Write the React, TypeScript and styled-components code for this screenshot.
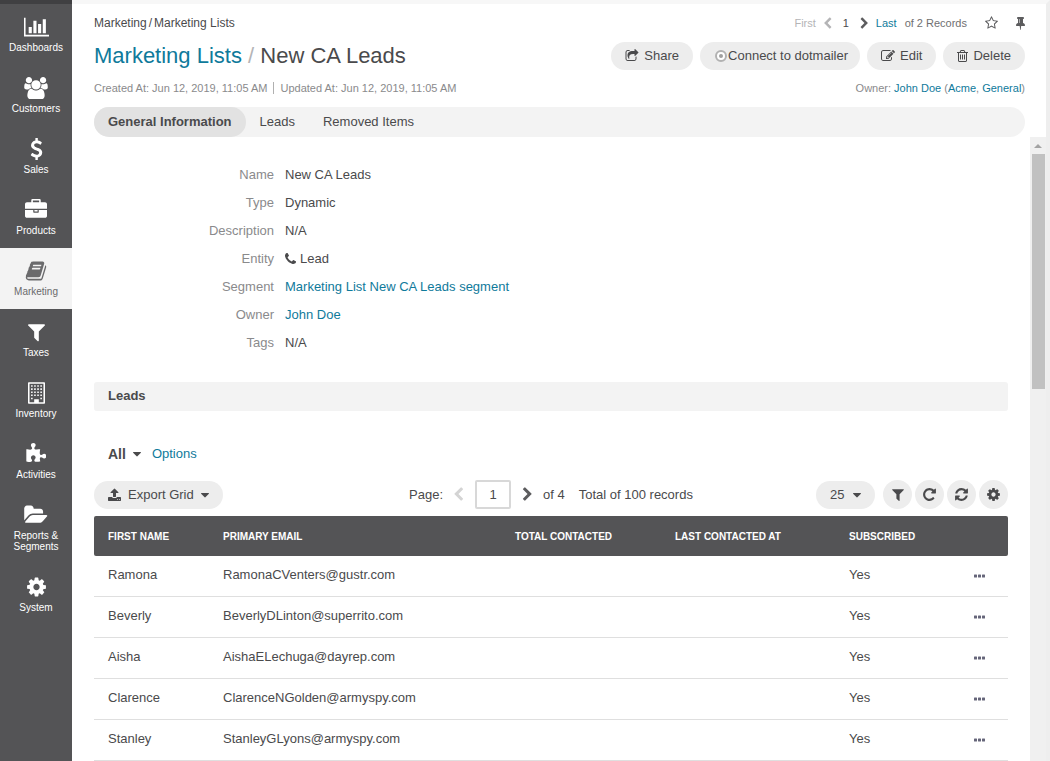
import React from "react";
import styled, { createGlobalStyle, css } from "styled-components";

const color = {
  text: "#4a4a4c",
  muted: "#8a8a8c",
  faint: "#b4b4b6",
  link: "#0f7a9b",
  dark: "#545456",
  darker: "#404042",
  pill: "#ededed",
  panel: "#f3f3f3",
  active: "#e2e2e2",
  line: "#dfdfdf",
  white: "#ffffff",
};

const GlobalStyle = createGlobalStyle`
  *, *::before, *::after { box-sizing: border-box; }
  body {
    margin: 0;
    background: ${color.white};
    color: ${color.text};
    font: 13px/18px "Liberation Sans", Arial, sans-serif;
  }
  button, input, select { font: inherit; color: inherit; }
  a { color: ${color.link}; text-decoration: none; }
`;

/* Each entry: [left edge, width, path] on a grid 1792 units high. */
const glyphs = {
  chart: [0, 2048, "M640 896v512h-256v-512h256zm384-512v1024h-256v-1024h256zm1024 1152v128h-2048v-1536h128v1408h1920zm-640-896v768h-256v-768h256zm384-384v1152h-256v-1152h256z"],
  users: [0, 1920, "M593 896q-162 5-265 128h-134q-82 0-138-40.5t-56-118.5q0-353 124-353 6 0 43.5 21t97.5 42.5 119 21.5q67 0 133-23-5 37-5 66 0 139 81 256zm1071 637q0 120-73 189.5t-194 69.5h-874q-121 0-194-69.5t-73-189.5q0-53 3.5-103.5t14-109 26.5-108.5 43-97.5 62-81 85.5-53.5 111.5-20q10 0 43 21.5t73 48 107 48 135 21.5 135-21.5 107-48 73-48 43-21.5q61 0 111.5 20t85.5 53.5 62 81 43 97.5 26.5 108.5 14 109 3.5 103.5zm-1024-1277q0 106-75 181t-181 75-181-75-75-181 75-181 181-75 181 75 75 181zm704 384q0 159-112.5 271.5t-271.5 112.5-271.5-112.5-112.5-271.5 112.5-271.5 271.5-112.5 271.5 112.5 112.5 271.5zm576 225q0 78-56 118.5t-138 40.5h-134q-103-123-265-128 81-117 81-256 0-29-5-66 66 23 133 23 59 0 119-21.5t97.5-42.5 43.5-21q124 0 124 353zm-128-609q0 106-75 181t-181 75-181-75-75-181 75-181 181-75 181 75 75 181z"],
  dollar: [384, 1024, "M1362 1185q0 153-99.5 263.5t-258.5 136.5v175q0 14-9 23t-23 9h-135q-13 0-22.5-9.5t-9.5-22.5v-175q-66-9-127.5-31t-101.5-44.5-74-48-46.5-37.5-17.5-18q-17-21-2-41l103-135q7-10 23-12 15-2 24 9l2 2q113 99 243 125 37 8 74 8 81 0 142.5-43t61.5-122q0-28-15-53t-33.5-42-58.5-37.5-66-32-80-32.5q-39-16-61.5-25t-61.5-26.5-62.5-31-56.5-35.5-53.5-42.5-43.5-49-35.5-58-21-66.5-8.5-78q0-138 98-242t255-134v-180q0-13 9.5-22.5t22.5-9.5h135q14 0 23 9t9 23v176q57 6 110.5 23t87 33.5 63.5 37.5 39 29 15 14q17 18 5 38l-81 146q-8 15-23 16-14 3-27-7-3-3-14.5-12t-39-26.5-58.5-32-74.5-26-85.5-11.5q-95 0-155 43t-60 111q0 26 8.5 48t29.5 41.5 39.5 33 56 31 60.5 27 70 27.5q53 20 81 31.5t76 35 75.5 42.5 62 50 53 63.5 31.5 76.5 13 94z"],
  briefcase: [0, 1792, "M640 256h512v-128h-512v128zm1152 640v480q0 66-47 113t-113 47h-1472q-66 0-113-47t-47-113v-480h672v160q0 26 19 45t45 19h320q26 0 45-19t19-45v-160h672zm-768 0v128h-256v-128h256zm768-480v384h-1792v-384q0-66 47-113t113-47h352v-160q0-40 28-68t68-28h576q40 0 68 28t28 68v160h352q66 0 113 47t47 113z"],
  book: [0, 1792, "M1703 478q40 57 18 129l-275 906q-19 64-76.5 107.5t-122.5 43.5h-923q-77 0-148.5-53.5t-99.5-131.5q-24-67-2-127 0-4 3-27t4-37q1-8-3-21.5t-3-19.5q2-11 8-21t16.5-23.5 16.5-23.5q23-38 45-91.5t30-91.5q3-10 .5-30t-.5-28q3-11 17-28t17-23q21-36 42-92t25-90q1-9-2.5-32t.5-28q4-13 22-30.5t22-22.5q19-26 42.5-84.5t27.5-96.5q1-8-3-25.5t-2-26.5q2-8 9-18t18-23 17-21q8-12 16.5-30.5t15-35 16-36 19.5-32 26.5-23.5 36-11.5 47.5 5.5l-1 3q38-9 51-9h761q74 0 114 56t18 130l-274 906q-36 119-71.5 153.5t-128.5 34.5h-869q-27 0-38 15-11 16-1 43 24 70 144 70h923q29 0 56-15.5t35-41.5l300-987q7-22 5-57 38 15 59 43zm-1064 2q-4 13 2 22.5t20 9.5h608q13 0 25.5-9.5t16.5-22.5l21-64q4-13-2-22.5t-20-9.5h-608q-13 0-25.5 9.5t-16.5 22.5zm-83 256q-4 13 2 22.5t20 9.5h608q13 0 25.5-9.5t16.5-22.5l21-64q4-13-2-22.5t-20-9.5h-608q-13 0-25.5 9.5t-16.5 22.5z"],
  filter: [192, 1408, "M1595 295q17 41-14 70l-493 493v742q0 42-39 59-13 5-25 5-27 0-45-19l-256-256q-19-19-19-45v-486l-493-493q-31-29-14-70 17-39 59-39h1280q42 0 59 39z"],
  building: [192, 1408, "M192 64q0-64 64-64h1280q64 0 64 64v1664q0 64-64 64h-1280q-64 0-64-64zM320 128v1536h384v-256h384v256h384v-1536zM448 256h128v128h-128zM704 256h128v128h-128zM960 256h128v128h-128zM1216 256h128v128h-128zM448 512h128v128h-128zM704 512h128v128h-128zM960 512h128v128h-128zM1216 512h128v128h-128zM448 768h128v128h-128zM704 768h128v128h-128zM960 768h128v128h-128zM1216 768h128v128h-128zM448 1024h128v128h-128zM704 1024h128v128h-128zM960 1024h128v128h-128zM1216 1024h128v128h-128zM448 1280h128v128h-128zM1216 1280h128v128h-128z"],
  puzzle: [64, 1664, "M1755 1082q0 81-44.5 135t-123.5 54q-41 0-77.5-17.5t-59-38-56.5-38-71-17.5q-110 0-110 124 0 39 16 115t15 115v5q-22 0-33 1-34 3-97.5 11.5t-115.5 13.5-98 5q-61 0-103-26.5t-42-83.5q0-37 17.5-71t38-56.5 38-59 17.5-77.5q0-79-54-123.5t-135-44.5q-84 0-143 45.5t-59 127.5q0 43 15 83t33.5 64.5 33.5 53 15 50.5q0 45-46 89-37 35-117 35-95 0-245-24-9-2-27.5-4t-27.5-4l-13-2q-1 0-3-1-2 0-2-1v-1024q2 1 17.5 3.5t34 5 21.5 3.5q150 24 245 24 80 0 117-35 46-44 46-89 0-22-15-50.5t-33.5-53-33.5-64.5-15-83q0-82 59-127.5t144-45.5q80 0 134 44.5t54 123.5q0 41-17.5 77.5t-38 59-38 56.5-17.5 71q0 57 42 83.5t103 26.5q64 0 180-15t163-17v2q-1 2-3.5 17.5t-5 34-3.5 21.5q-24 150-24 245 0 80 35 117 44 46 89 46 22 0 50.5-15t53-33.5 64.5-33.5 83-15q82 0 127.5 59t45.5 143z"],
  folder: [0, 1920, "M1879 952q0 31-31 66l-336 396q-43 51-120.5 86.5t-143.5 35.5h-1088q-34 0-60.5-13t-26.5-43q0-31 31-66l336-396q43-51 120.5-86.5t143.5-35.5h1088q34 0 60.5 13t26.5 43zm-343-344v160h-832q-94 0-197 47.5t-164 119.5l-337 396-5 6q0-4-.5-12.5t-.5-12.5v-960q0-92 66-158t158-66h320q92 0 158 66t66 158v32h544q92 0 158 66t66 158z"],
  cog: [128, 1536, "M1152 896q0-106-75-181t-181-75-181 75-75 181 75 181 181 75 181-75 75-181zm512-109v222q0 12-8 23t-20 13l-185 28q-19 54-39 91 35 50 107 138 10 12 10 25t-9 23q-27 37-99 108t-94 71q-12 0-26-9l-138-108q-44 23-91 38-16 136-29 186-7 28-36 28h-222q-14 0-24.5-8.5t-11.5-21.5l-28-184q-49-16-90-37l-141 107q-10 9-25 9-14 0-25-11-126-114-165-168-7-10-7-23 0-12 8-23 15-21 51-66.5t54-70.5q-27-50-41-99l-183-27q-13-2-21-12.5t-8-23.5v-222q0-12 8-23t19-13l186-28q14-46 39-92-40-57-107-138-10-12-10-24 0-10 9-23 26-36 98.5-107.5t94.5-71.5q13 0 26 10l138 107q44-23 91-38 16-136 29-186 7-28 36-28h222q14 0 24.5 8.5t11.5 21.5l28 184q49 16 90 37l142-107q9-9 24-9 13 0 25 10 129 119 165 170 7 8 7 22 0 12-8 23-15 21-51 66.5t-54 70.5q26 50 41 98l183 28q13 2 21 12.5t8 23.5z"],
  star: [64, 1664, "M1201 1004l306-297-422-62-189-382-189 382-422 62 306 297-73 421 378-199 377 199zm527-357q0 22-26 48l-363 354 86 500q1 7 1 20 0 50-41 50-19 0-40-12l-449-236-449 236q-22 12-40 12-21 0-31.5-14.5t-10.5-35.5q0-6 2-20l86-500-364-354q-25-27-25-48 0-37 56-46l502-73 225-455q19-41 49-41t49 41l225 455 502 73q56 9 56 46z"],
  pin: [320, 1152, "M800 864v-448q0-14-9-23t-23-9-23 9-9 23v448q0 14 9 23t23 9 23-9 9-23zm672 352q0 26-19 45t-45 19h-429l-51 483q-2 12-10.5 20.5t-20.5 8.5h-1q-27 0-32-27l-76-485h-404q-26 0-45-19t-19-45q0-123 78.5-221.5t177.5-98.5v-512q-52 0-90-38t-38-90 38-90 90-38h640q52 0 90 38t38 90-38 90-90 38v512q99 0 177.5 98.5t78.5 221.5z"],
  left: [384, 1152, "M1427 301l-531 531 531 531q19 19 19 45t-19 45l-166 166q-19 19-45 19t-45-19l-742-742q-19-19-19-45t19-45l742-742q19-19 45-19t45 19l166 166q19 19 19 45t-19 45z"],
  right: [256, 1152, "M1363 877l-742 742q-19 19-45 19t-45-19l-166-166q-19-19-19-45t19-45l531-531-531-531q-19-19-19-45t19-45l166-166q19-19 45-19t45 19l742 742q19 19 19 45t-19 45z"],
  phone: [192, 1408, "M1600 1240q0 27-10 70.5t-21 68.5q-21 50-122 106-94 51-186 51-27 0-53-3.5t-57.5-12.5-47-14.5-55.5-20.5-49-18q-98-35-175-83-127-79-264-216t-216-264q-48-77-83-175-3-9-18-49t-20.5-55.5-14.5-47-12.5-57.5-3.5-53q0-92 51-186 56-101 106-122 25-11 68.5-21t70.5-10q14 0 21 3 18 6 53 76 11 19 30 54t35 63.5 31 53.5q3 4 17.5 25t21.5 35.5 7 28.5q0 20-28.5 50t-62 55-62 53-28.5 46q0 9 5 22.5t8.5 20.5 14 24 11.5 19q76 137 174 235t235 174q2 1 19 11.5t24 14 20.5 8.5 22.5 5q18 0 46-28.5t53-62 55-62 50-28.5q14 0 28.5 7t35.5 21.5 25 17.5q25 15 53.5 31t63.5 35 54 30q70 35 76 53 3 7 3 21z"],
  trash: [192, 1408, "M704 736v576q0 14-9 23t-23 9h-64q-14 0-23-9t-9-23v-576q0-14 9-23t23-9h64q14 0 23 9t9 23zm256 0v576q0 14-9 23t-23 9h-64q-14 0-23-9t-9-23v-576q0-14 9-23t23-9h64q14 0 23 9t9 23zm256 0v576q0 14-9 23t-23 9h-64q-14 0-23-9t-9-23v-576q0-14 9-23t23-9h64q14 0 23 9t9 23zm128 724v-948h-896v948q0 22 7 40.5t14.5 27 10.5 8.5h832q3 0 10.5-8.5t14.5-27 7-40.5zm-672-1076h448l-48-117q-7-9-17-11h-317q-10 2-17 11zm928 32v64q0 14-9 23t-23 9h-96v948q0 83-47 143.5t-113 60.5h-832q-66 0-113-58.5t-47-141.5v-952h-96q-14 0-23-9t-9-23v-64q0-14 9-23t23-9h309l70-167q15-37 54-63t79-26h320q40 0 79 26t54 63l70 167h309q14 0 23 9t9 23z"],
  edit: [0, 1792, "M888 1184l116-116-152-152-116 116v56h96v96h56zm440-720q-16-16-33 1l-350 350q-17 17-1 33t33-1l350-350q17-17 1-33zm80 594v190q0 119-84.5 203.5t-203.5 84.5h-832q-119 0-203.5-84.5t-84.5-203.5v-832q0-119 84.5-203.5t203.5-84.5h832q63 0 117 25 15 7 18 23 3 17-9 29l-49 49q-14 14-32 8-23-6-45-6h-832q-66 0-113 47t-47 113v832q0 66 47 113t113 47h832q66 0 113-47t47-113v-126q0-13 9-22l64-64q15-15 35-7t20 29zm-96-738l288 288-672 672h-288v-288zm444 132l-92 92-288-288 92-92q28-28 68-28t68 28l152 152q28 28 28 68t-28 68z"],
  share: [0, 1792, "M1472 989v259q0 119-84.5 203.5t-203.5 84.5h-832q-119 0-203.5-84.5t-84.5-203.5v-832q0-119 84.5-203.5t203.5-84.5h255q13 0 22.5 9.5t9.5 22.5q0 27-26 32-77 26-133 60-10 4-16 4h-112q-66 0-113 47t-47 113v832q0 66 47 113t113 47h832q66 0 113-47t47-113v-214q0-19 18-29 28-13 54-37 16-16 35-8 21 9 21 29zm237-496l-384 384q-18 19-45 19-12 0-25-5-39-17-39-59v-192h-160q-323 0-438 131-119 137-74 473 3 23-20 34-8 2-12 2-16 0-26-13-10-14-21-31t-39.5-68.5-49.5-99.5-38.5-114-17.5-122q0-49 3.5-91t14-90 28-88 47-81.5 68.5-74 94.5-61.5 124.5-48.5 159.5-30.5 196.5-11h160v-192q0-42 39-59 13-5 25-5 26 0 45 19l384 384q19 19 19 45t-19 45z"],
  repeat: [128, 1536, "M1664 256v448q0 26-19 45t-45 19h-448q-42 0-59-40-17-39 14-69l138-138q-148-137-349-137-104 0-198.5 40.5t-163.5 109.5-109.5 163.5-40.5 198.5 40.5 198.5 109.5 163.5 163.5 109.5 198.5 40.5q119 0 225-52t179-147q7-10 23-12 15 0 25 9l137 138q9 8 9.5 20.5t-7.5 22.5q-109 132-264 204.5t-327 72.5q-156 0-298-61t-245-164-164-245-61-298 61-298 164-245 245-164 298-61q147 0 284.5 55.5t244.5 156.5l130-129q29-31 70-14 39 17 39 59z"],
  refresh: [128, 1536, "M1639 1056q0 5-1 7-64 268-268 434.5t-478 166.5q-146 0-282.5-55t-243.5-157l-129 129q-19 19-45 19t-45-19-19-45v-448q0-26 19-45t45-19h448q26 0 45 19t19 45-19 45l-137 137q71 66 161 102t187 36q134 0 250-65t186-179q11-17 53-117 8-23 30-23h192q13 0 22.5 9.5t9.5 22.5zm25-800v448q0 26-19 45t-45 19h-448q-26 0-45-19t-19-45 19-45l138-138q-148-137-349-137-134 0-250 65t-186 179q-11 17-53 117-8 23-30 23h-199q-13 0-22.5-9.5t-9.5-22.5v-7q65-268 270-434.5t480-166.5q146 0 284 55.5t245 156.5l130-129q19-19 45-19t45 19 19 45z"],
  upload: [64, 1664, "M1344 1472q0-26-19-45t-45-19-45 19-19 45 19 45 45 19 45-19 19-45zm256 0q0-26-19-45t-45-19-45 19-19 45 19 45 45 19 45-19 19-45zm128-224v320q0 40-28 68t-68 28h-1472q-40 0-68-28t-28-68v-320q0-40 28-68t68-28h427q21 56 70.5 92t110.5 36h256q61 0 110.5-36t70.5-92h427q40 0 68 28t28 68zm-325-648q-17 40-59 40h-256v448q0 26-19 45t-45 19h-256q-26 0-45-19t-19-45v-448h-256q-42 0-59-40-17-39 14-69l448-448q18-19 45-19t45 19l448 448q31 30 14 69z"],
  caret: [384, 1024, "M1408 704q0 26-19 45l-448 448q-19 19-45 19t-45-19l-448-448q-19-19-19-45t19-45 45-19h896q26 0 45 19t19 45z"],
  dots: [192, 1408, "M256 704h256q64 0 64 64v256q0 64-64 64h-256q-64 0-64-64v-256q0-64 64-64zM768 704h256q64 0 64 64v256q0 64-64 64h-256q-64 0-64-64v-256q0-64 64-64zM1280 704h256q64 0 64 64v256q0 64-64 64h-256q-64 0-64-64v-256q0-64 64-64z"],
} as const;

type GlyphName = keyof typeof glyphs;

const Svg = styled.svg`
  display: block;
  flex: none;
  fill: currentColor;
`;

function Icon({ name, size = 14 }: { name: GlyphName; size?: number }) {
  const [x, width, path] = glyphs[name];
  return (
    <Svg
      viewBox={`${x} 0 ${width} 1792`}
      width={Math.round((size * width) / 1792)}
      height={size}
      aria-hidden="true"
    >
      <path fillRule={name === "building" ? "evenodd" : "nonzero"} d={path} />
    </Svg>
  );
}

const Shell = styled.div`
  display: flex;
  min-height: 100vh;
`;

const Sidebar = styled.nav`
  flex: 0 0 72px;
  border-top: 4px solid ${color.darker};
  background: ${color.dark};
`;

const NavItem = styled.a<{ $active?: boolean }>`
  display: flex;
  flex-direction: column;
  align-items: center;
  gap: 4px;
  padding: 12px 4px;
  color: ${(p) => (p.$active ? "#6a6a6c" : color.white)};
  background: ${(p) => (p.$active ? color.panel : "transparent")};
  font-size: 10px;
  line-height: 11px;
  text-align: center;
`;

const Main = styled.main`
  flex: 1;
  min-width: 0;
  display: flex;
  flex-direction: column;
  border-top: 4px solid #f7f7f7;
  border-right: 4px solid #eeeeee;
`;

const Header = styled.header`
  padding: 10px 21px 0 22px;
`;

const Bar = styled.div`
  display: flex;
  align-items: center;
  justify-content: space-between;
`;

const Crumbs = styled.div`
  display: flex;
  gap: 2px;
  font-size: 12px;
`;

const Records = styled.div`
  display: flex;
  align-items: center;
  gap: 8px;
  color: #6f6f71;
  font-size: 11px;
`;

const Faint = styled.span`
  color: ${color.faint};
`;

const Current = styled.span`
  width: 12px;
  text-align: center;
  color: ${color.text};
`;

const IconButton = styled.button<{ $tone?: string }>`
  display: flex;
  align-items: center;
  padding: 0;
  border: 0;
  background: none;
  color: ${(p) => p.$tone ?? "#5c5c5e"};
`;

const Tools = styled.div`
  display: flex;
  gap: 18px;
  margin-left: 10px;
`;

const TitleBar = styled(Bar)`
  margin-top: 10px;
`;

const Title = styled.h1`
  margin: 0;
  font-size: 22px;
  font-weight: 400;
  line-height: 28px;
`;

const Group = styled.div<{ $gap?: number }>`
  display: flex;
  align-items: center;
  gap: ${(p) => p.$gap ?? 7}px;
`;

const pill = css`
  height: 28px;
  border: 0;
  border-radius: 14px;
  background: ${color.pill};
`;

const PillButton = styled.button<{ $gap?: number; $pad?: number }>`
  ${pill}
  display: flex;
  align-items: center;
  gap: ${(p) => p.$gap ?? 5}px;
  padding: 0 ${(p) => p.$pad ?? 14}px;
  white-space: nowrap;
`;

const MetaBar = styled(Bar)`
  margin-top: 10px;
  font-size: 11px;
  line-height: 16px;
  color: ${color.muted};
`;

const Stamp = styled.span`
  & + & {
    margin-left: 6px;
    padding-left: 6px;
    border-left: 1px solid #b0b0b0;
  }
`;

const Tabs = styled.div`
  display: flex;
  height: 30px;
  margin-top: 11px;
  border-radius: 15px;
  background: ${color.panel};
`;

const Tab = styled.button<{ $active?: boolean }>`
  padding: 0 14px;
  border: 0;
  border-radius: 15px;
  background: ${(p) => (p.$active ? color.active : "transparent")};
  font-weight: ${(p) => (p.$active ? 700 : 400)};
`;

const Body = styled.div`
  flex: 1;
  display: flex;
`;

const Content = styled.div`
  flex: 1;
  min-width: 0;
  padding: 24px 22px 0;
`;

const Details = styled.dl`
  display: grid;
  grid-template-columns: 180px 1fr;
  column-gap: 11px;
  margin: 0;
  line-height: 28px;
`;

const Term = styled.dt`
  text-align: right;
  color: ${color.muted};
`;

const Value = styled.dd`
  display: flex;
  align-items: center;
  gap: 4px;
  margin: 0;
`;

const SectionTitle = styled.h2`
  margin: 25px 0 34px;
  padding: 0 14px;
  border-radius: 3px;
  background: ${color.panel};
  font-size: 13px;
  line-height: 28px;
  border-bottom: 1px solid ${color.panel};
`;

const Views = styled.div`
  display: flex;
  align-items: center;
  gap: 11px;
  padding-left: 14px;
`;

const ViewButton = styled.button`
  display: flex;
  align-items: center;
  gap: 7px;
  padding: 0;
  border: 0;
  background: none;
  font-size: 14px;
  font-weight: 700;
`;

const Toolbar = styled.div`
  display: grid;
  grid-template-columns: 1fr auto 1fr;
  align-items: center;
  margin: 17px 0 7px;
`;

const Pager = styled.div`
  display: flex;
  align-items: center;
  gap: 11px;
`;

const PageInput = styled.input`
  width: 36px;
  height: 29px;
  padding: 0;
  border: 2px solid #d8d8d8;
  border-radius: 2px;
  background: ${color.white};
  text-align: center;
`;

const GridTools = styled.div`
  display: flex;
  align-items: center;
  justify-content: flex-end;
  gap: 3px;
`;

const SizePicker = styled.label`
  ${pill}
  display: flex;
  align-items: center;
  margin-right: 5px;
  padding-right: 14px;
`;

const SizeSelect = styled.select`
  appearance: none;
  width: 37px;
  height: 28px;
  padding: 0 0 0 14px;
  border: 0;
  background: none;
`;

const RoundButton = styled.button`
  display: flex;
  align-items: center;
  justify-content: center;
  width: 29px;
  height: 29px;
  padding: 0;
  border: 0;
  border-radius: 50%;
  background: ${color.pill};
`;

const Grid = styled.table`
  width: 100%;
  table-layout: fixed;
  border-collapse: separate;
  border-spacing: 0;
`;

const Col = styled.col<{ $width?: number }>`
  width: ${(p) => (p.$width ? `${p.$width}px` : "auto")};
`;

const HeadCell = styled.th`
  height: 40px;
  padding: 2px 14px 0;
  background: ${color.dark};
  color: ${color.white};
  font-size: 10px;
  text-align: left;
  text-transform: uppercase;
  white-space: nowrap;

  &:first-child { border-radius: 2px 0 0 2px; }
  &:last-child { border-radius: 0 2px 2px 0; }
`;

const Cell = styled.td`
  height: 41px;
  padding: 0 14px 3px;
  border-bottom: 1px solid ${color.line};
`;

const RowMenu = styled(IconButton)`
  margin: 2px auto 0;
`;

const ScrollTrack = styled.div`
  flex: 0 0 16px;
  display: flex;
  flex-direction: column;
  align-items: center;
  background: #f0f0f0;
`;

const ScrollArrow = styled.span`
  margin: 7px 0 6px;
  border: 4px solid transparent;
  border-top: 0;
  border-bottom-color: #a3a3a3;
`;

const ScrollThumb = styled.span`
  width: 13px;
  height: 235px;
  background: #c1c1c1;
`;

const nav: { icon: GlyphName; label: string; active?: boolean }[] = [
  { icon: "chart", label: "Dashboards" },
  { icon: "users", label: "Customers" },
  { icon: "dollar", label: "Sales" },
  { icon: "briefcase", label: "Products" },
  { icon: "book", label: "Marketing", active: true },
  { icon: "filter", label: "Taxes" },
  { icon: "building", label: "Inventory" },
  { icon: "puzzle", label: "Activities" },
  { icon: "folder", label: "Reports & Segments" },
  { icon: "cog", label: "System" },
];

const details: [string, React.ReactNode][] = [
  ["Name", "New CA Leads"],
  ["Type", "Dynamic"],
  ["Description", "N/A"],
  ["Entity", <><Icon name="phone" />Lead</>],
  ["Segment", <a href="#segment">Marketing List New CA Leads segment</a>],
  ["Owner", <a href="#owner">John Doe</a>],
  ["Tags", "N/A"],
];

const leads = [
  ["Ramona", "RamonaCVenters@gustr.com"],
  ["Beverly", "BeverlyDLinton@superrito.com"],
  ["Aisha", "AishaELechuga@dayrep.com"],
  ["Clarence", "ClarenceNGolden@armyspy.com"],
  ["Stanley", "StanleyGLyons@armyspy.com"],
];

const gridTools: { icon: GlyphName; label: string }[] = [
  { icon: "filter", label: "Filters" },
  { icon: "repeat", label: "Refresh" },
  { icon: "refresh", label: "Reset" },
  { icon: "cog", label: "Grid settings" },
];

function DotmailerLogo() {
  return (
    <Svg width="16" height="14" viewBox="0 0 16 14" aria-hidden="true">
      <circle cx="9" cy="7" r="5" fill="#fff" stroke="#b2b2b2" strokeWidth="2" />
      <circle cx="9" cy="7" r="2" fill="#a0a0a0" />
    </Svg>
  );
}

export default function App() {
  return (
    <>
      <GlobalStyle />
      <Shell>
        <Sidebar>
          {nav.map((item) => (
            <NavItem key={item.label} href="#nav" $active={item.active}>
              <Icon name={item.icon} size={22} />
              {item.label}
            </NavItem>
          ))}
        </Sidebar>
        <Main>
          <Header>
            <Bar>
              <Crumbs>
                <span>Marketing</span>
                <span>/</span>
                <span>Marketing Lists</span>
              </Crumbs>
              <Records>
                <Faint>First</Faint>
                <IconButton aria-label="Previous record" $tone={color.faint}>
                  <Icon name="left" size={13} />
                </IconButton>
                <Current>1</Current>
                <IconButton aria-label="Next record">
                  <Icon name="right" size={13} />
                </IconButton>
                <a href="#last">Last</a>
                <span>of 2 Records</span>
                <Tools>
                  <IconButton aria-label="Add to favorites"><Icon name="star" /></IconButton>
                  <IconButton aria-label="Pin page"><Icon name="pin" /></IconButton>
                </Tools>
              </Records>
            </Bar>
            <TitleBar>
              <Title>
                <a href="#lists">Marketing Lists</a> <Faint>/</Faint> New CA Leads
              </Title>
              <Group>
                <PillButton><Icon name="share" />Share</PillButton>
                <PillButton $gap={0} $pad={12}><DotmailerLogo />Connect to dotmailer</PillButton>
                <PillButton><Icon name="edit" />Edit</PillButton>
                <PillButton><Icon name="trash" />Delete</PillButton>
              </Group>
            </TitleBar>
            <MetaBar>
              <div>
                <Stamp>Created At: Jun 12, 2019, 11:05 AM</Stamp>
                <Stamp>Updated At: Jun 12, 2019, 11:05 AM</Stamp>
              </div>
              <div>
                Owner: <a href="#owner">John Doe</a> (<a href="#acme">Acme</a>, <a href="#general">General</a>)
              </div>
            </MetaBar>
            <Tabs>
              <Tab $active>General Information</Tab>
              <Tab>Leads</Tab>
              <Tab>Removed Items</Tab>
            </Tabs>
          </Header>
          <Body>
            <Content>
              <Details>
                {details.map(([label, value]) => (
                  <React.Fragment key={label}>
                    <Term>{label}</Term>
                    <Value>{value}</Value>
                  </React.Fragment>
                ))}
              </Details>
              <SectionTitle>Leads</SectionTitle>
              <Views>
                <ViewButton>All<Icon name="caret" /></ViewButton>
                <a href="#options">Options</a>
              </Views>
              <Toolbar>
                <Group>
                  <PillButton $gap={7}>
                    <Icon name="upload" />Export Grid<Icon name="caret" />
                  </PillButton>
                </Group>
                <Pager>
                  <label htmlFor="page">Page:</label>
                  <IconButton aria-label="Previous page" $tone="#d4d4d4"><Icon name="left" size={15} /></IconButton>
                  <PageInput id="page" defaultValue="1" />
                  <IconButton aria-label="Next page"><Icon name="right" size={15} /></IconButton>
                  <Group $gap={14}>
                    <span>of 4</span>
                    <span>Total of 100 records</span>
                  </Group>
                </Pager>
                <GridTools>
                  <SizePicker>
                    <SizeSelect aria-label="Records per page" defaultValue="25">
                      <option>10</option>
                      <option>25</option>
                      <option>50</option>
                      <option>100</option>
                    </SizeSelect>
                    <Icon name="caret" />
                  </SizePicker>
                  {gridTools.map((tool) => (
                    <RoundButton key={tool.label} aria-label={tool.label}>
                      <Icon name={tool.icon} size={15} />
                    </RoundButton>
                  ))}
                </GridTools>
              </Toolbar>
              <Grid>
                <colgroup>
                  <Col $width={115} />
                  <Col />
                  <Col $width={160} />
                  <Col $width={174} />
                  <Col $width={116} />
                  <Col $width={57} />
                </colgroup>
                <thead>
                  <tr>
                    <HeadCell>First name</HeadCell>
                    <HeadCell>Primary email</HeadCell>
                    <HeadCell>Total contacted</HeadCell>
                    <HeadCell>Last contacted at</HeadCell>
                    <HeadCell>Subscribed</HeadCell>
                    <HeadCell aria-label="Actions" />
                  </tr>
                </thead>
                <tbody>
                  {leads.map(([name, email]) => (
                    <tr key={email}>
                      <Cell>{name}</Cell>
                      <Cell>{email}</Cell>
                      <Cell />
                      <Cell />
                      <Cell>Yes</Cell>
                      <Cell>
                        <RowMenu aria-label={`Actions for ${name}`} $tone="#66667a">
                          <Icon name="dots" />
                        </RowMenu>
                      </Cell>
                    </tr>
                  ))}
                </tbody>
              </Grid>
            </Content>
            <ScrollTrack>
              <ScrollArrow />
              <ScrollThumb />
            </ScrollTrack>
          </Body>
        </Main>
      </Shell>
    </>
  );
}
